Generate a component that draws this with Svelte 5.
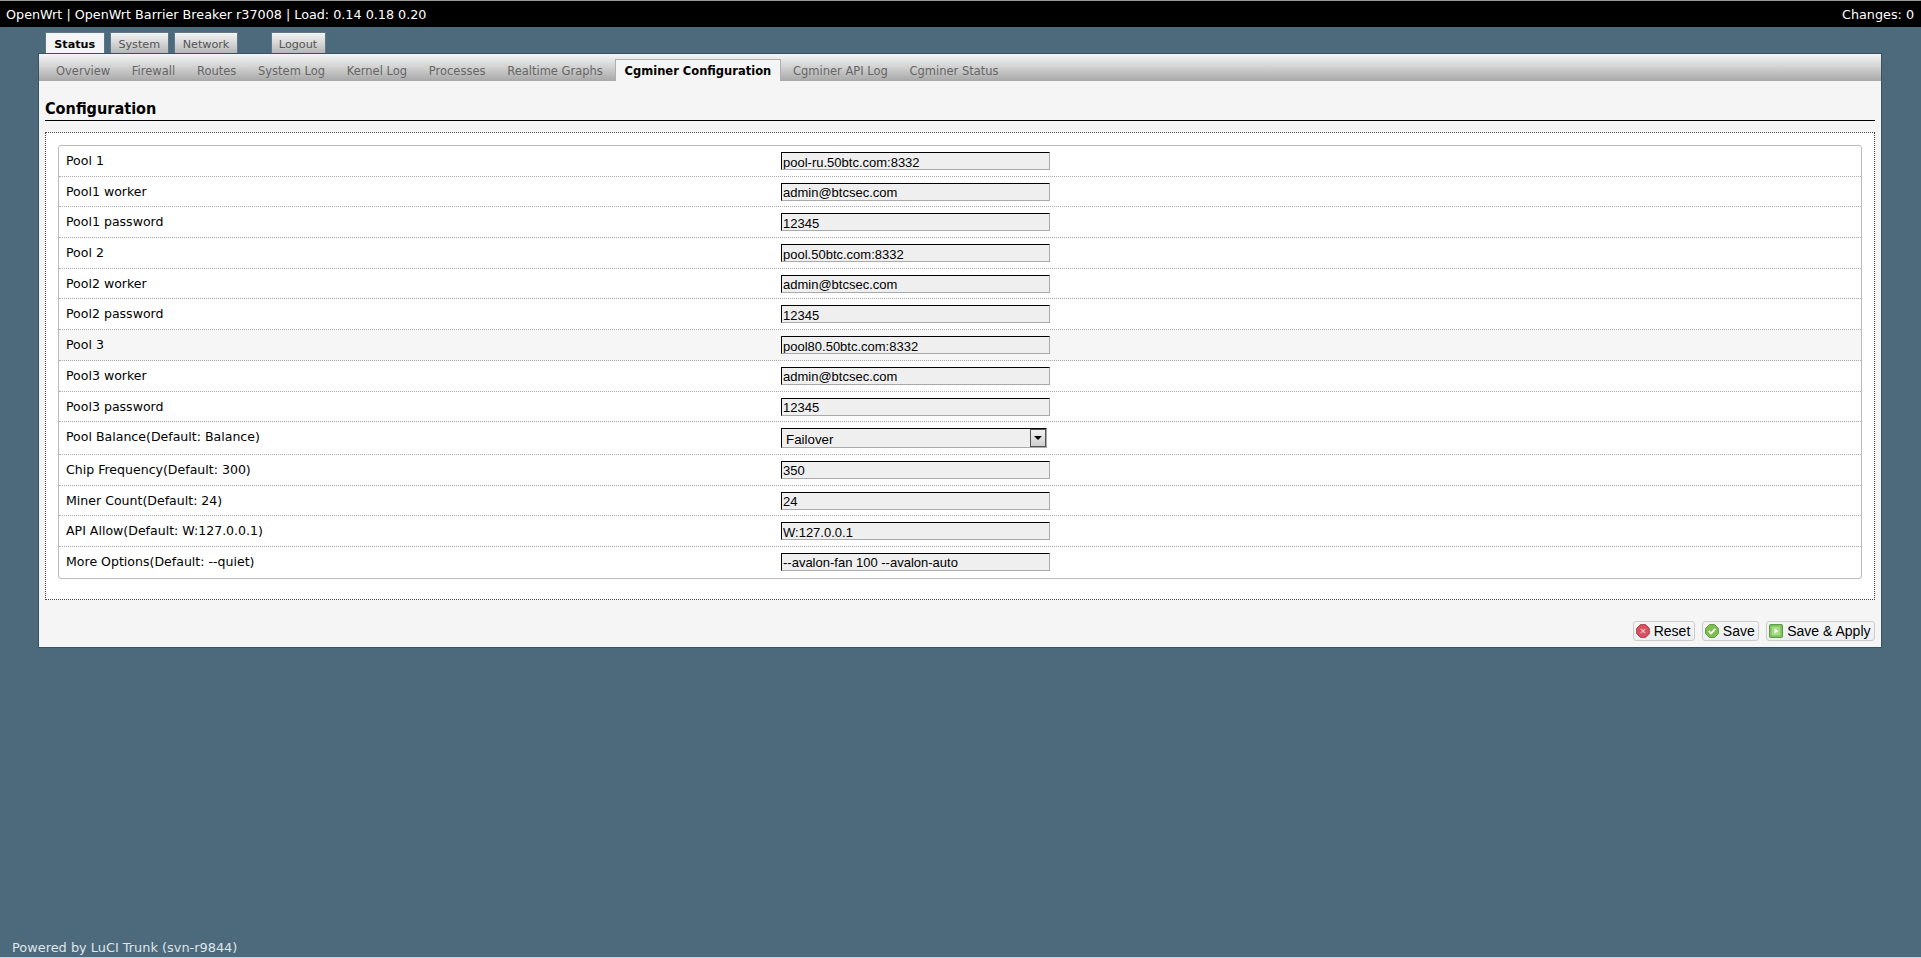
<script>
    const menu = ["Status", "System", "Network"];
    const subTabs = [
        "Overview", "Firewall", "Routes", "System Log", "Kernel Log", "Processes",
        "Realtime Graphs", "Cgminer Configuration", "Cgminer API Log", "Cgminer Status"
    ];
    const activeTab = "Cgminer Configuration";

    const fields = [
        { label: "Pool 1", value: "pool-ru.50btc.com:8332" },
        { label: "Pool1 worker", value: "admin@btcsec.com" },
        { label: "Pool1 password", value: "12345" },
        { label: "Pool 2", value: "pool.50btc.com:8332" },
        { label: "Pool2 worker", value: "admin@btcsec.com" },
        { label: "Pool2 password", value: "12345" },
        { label: "Pool 3", value: "pool80.50btc.com:8332", hover: true },
        { label: "Pool3 worker", value: "admin@btcsec.com" },
        { label: "Pool3 password", value: "12345" },
        { label: "Pool Balance(Default: Balance)", value: "Failover", select: true },
        { label: "Chip Frequency(Default: 300)", value: "350" },
        { label: "Miner Count(Default: 24)", value: "24" },
        { label: "API Allow(Default: W:127.0.0.1)", value: "W:127.0.0.1" },
        { label: "More Options(Default: --quiet)", value: "--avalon-fan 100 --avalon-auto" }
    ];
</script>

<div class="page">
    <header class="topbar">
        <span>OpenWrt | OpenWrt Barrier Breaker r37008 | Load: 0.14 0.18 0.20</span>
        <span>Changes: 0</span>
    </header>

    <nav class="menu">
        {#each menu as item, i}
            <a href="#top" class="menu-tab" class:active={i === 0}>{item}</a>
        {/each}
        <a href="#top" class="menu-tab logout">Logout</a>
    </nav>

    <main class="box">
        <ul class="tabs">
            {#each subTabs as tab}
                <li class="tab" class:active={tab === activeTab}>{tab}</li>
            {/each}
        </ul>

        <div class="content">
            <h2>Configuration</h2>

            <fieldset class="section">
                <div class="table">
                    {#each fields as field}
                        <div class="row" class:hover={field.hover} class:tall={field.select}>
                            <label class="field-label" for={field.label}>{field.label}</label>
                            {#if field.select}
                                <div class="select-wrap">
                                    <select id={field.label}>
                                        <option>Failover</option>
                                        <option>Balance</option>
                                        <option>Load Balance</option>
                                    </select>
                                    <span class="select-arrow"></span>
                                </div>
                            {:else}
                                <input id={field.label} type="text" value={field.value} />
                            {/if}
                        </div>
                    {/each}
                </div>
            </fieldset>

            <div class="actions">
                <button type="reset">
                    <svg width="14" height="14" viewBox="0 0 16 16">
                        <path d="M5 .7h6L15.300 5v6L11 15.300H5L.7 11V5z" fill="#d9505f" stroke="#a33a48" />
                        <path d="M5.500 5.500l5 5m0-5l-5 5" stroke="#f6c9cd" stroke-width="1.300" fill="none" />
                    </svg>
                    Reset
                </button>
                <button type="button">
                    <svg width="14" height="14" viewBox="0 0 16 16">
                        <path d="M5 .7h6L15.300 5v6L11 15.300H5L.7 11V5z" fill="#7fbf4d" stroke="#4f8f2f" />
                        <path d="M4.300 8l2.700 2.800 4.700-5.300" stroke="#fff" stroke-width="2" fill="none" />
                    </svg>
                    Save
                </button>
                <button type="button">
                    <svg width="14" height="14" viewBox="0 0 16 16">
                        <rect x=".5" y=".5" width="15" height="15" rx="1.500" fill="#7fc25a" stroke="#4a8f35" />
                        <rect x="3" y="3" width="10" height="10" fill="#a8dc86" />
                        <path d="M6.500 5l4 3-4 3z" fill="#fff" />
                    </svg>
                    Save &amp; Apply
                </button>
            </div>
        </div>
    </main>

    <footer class="footer">Powered by LuCI Trunk (svn-r9844)</footer>
</div>

<style>
    :global(body) {
        margin: 0;
        background: #4c6a7c;
        font-family: "DejaVu Sans", Verdana, sans-serif;
        font-size: 12px;
    }

    .page {
        display: flex;
        flex-direction: column;
        height: 958px;
        box-sizing: border-box;
        border-top: 1px solid #9a9a9a;
        border-bottom: 1px solid #b5d3e2;
        overflow: hidden;
    }

    .topbar {
        display: flex;
        justify-content: space-between;
        align-items: center;
        height: 26px;
        padding: 0 7px 0 6px;
        background: #000;
        color: #fff;
        font-size: 12.75px;
    }

    .menu {
        display: flex;
        height: 27px;
        margin-left: 45px;
        padding-top: 5px;
        box-sizing: border-box;
        align-items: flex-end;
    }

    .menu-tab {
        display: flex;
        align-items: center;
        justify-content: center;
        box-sizing: border-box;
        width: 59.5px;
        height: 22px;
        margin-right: 5px;
        padding-top: 1px;
        border: 1px solid #5b7788;
        border-bottom: none;
        background: linear-gradient(#f4f4f4, #b4b4b4);
        color: #555;
        font-size: 11.2px;
        text-decoration: none;
    }

    .menu-tab:nth-child(3) {
        width: 64px;
        margin-right: 32.5px;
    }

    .menu-tab.logout {
        width: 55px;
    }

    .menu-tab.active {
        background: #f5f5f5;
        color: #000;
        font-weight: bold;
    }

    .box {
        margin: 0 40px 0 39px;
        background: #f5f5f5;
        box-shadow: 0 0 0 1px #39525f;
    }

    .tabs {
        display: flex;
        align-items: flex-end;
        height: 27px;
        margin: 0;
        padding: 0 0 0 7px;
        list-style: none;
        background: linear-gradient(#f4f5f6, #d8d8d8 40%, #a8a8a8);
    }

    .tab {
        box-sizing: border-box;
        height: 22px;
        padding: 4px 9px 0;
        margin-right: 1.700px;
        border: 1px solid transparent;
        border-bottom: none;
        color: #666;
        font-size: 11.5px;
        white-space: nowrap;
    }

    .tab.active {
        background: #f5f5f5;
        border-color: #b0b0b0;
        color: #000;
        font-weight: bold;
    }

    .content {
        padding: 0 6px;
    }

    h2 {
        margin: 0;
        padding-top: 18px;
        height: 40px;
        box-sizing: border-box;
        border-bottom: 1px solid #000;
        color: #000;
        font-family: "DejaVu Sans Condensed", "DejaVu Sans", sans-serif;
        font-stretch: condensed;
        font-size: 16.1px;
        line-height: 19px;
        font-weight: bold;
    }

    .section {
        margin: 11px 0 0;
        padding: 12px 12px 20px;
        border: 1px dotted #444;
        background: #fff;
        min-width: 0;
    }

    .table {
        border: 1px solid #bbb;
        border-radius: 3px;
        background: #fff;
    }

    .row {
        display: flex;
        box-sizing: border-box;
        height: 30.7px;
        padding-left: 7px;
        border-bottom: 1px dotted #aaa;
    }

    .row:last-child {
        border-bottom: none;
    }

    .row.tall {
        height: 32.7px;
    }

    .row.hover {
        background: #f6f6f6;
    }

    .field-label {
        width: 715px;
        padding-top: 7px;
        line-height: 16px;
        color: #000;
        font-size: 12.55px;
    }

    input,
    select {
        box-sizing: border-box;
        height: 18px;
        margin-top: 6px;
        padding: 2px 1px 0;
        border: 1px solid;
        border-color: #000 #aaa #aaa #000;
        border-radius: 0;
        background: #efefef;
        color: #000;
        font-family: "Liberation Sans", Arial, sans-serif;
        font-size: 13px;
        outline: none;
    }

    input {
        width: 269px;
    }

    .select-wrap {
        position: relative;
        width: 266px;
    }

    select {
        appearance: none;
        width: 100%;
        height: 20px;
        padding-left: 4px;
        font-size: 13.33px;
    }

    .select-arrow {
        position: absolute;
        top: 7px;
        right: 1px;
        box-sizing: border-box;
        width: 16px;
        height: 18px;
        border: 1px solid #555;
        background: linear-gradient(#f2f2f2, #cfcfcf);
    }

    .select-arrow::after {
        content: "";
        position: absolute;
        left: 3px;
        top: 6px;
        border: 4px solid transparent;
        border-top: 4px solid #000;
        border-bottom: none;
    }

    .actions {
        display: flex;
        justify-content: flex-end;
        gap: 7px;
        padding: 21px 0 6px;
    }

    button {
        display: flex;
        align-items: center;
        gap: 4px;
        box-sizing: border-box;
        height: 20px;
        padding: 0 3.500px 0 2px;
        border: 1px solid #ccc;
        border-radius: 3px;
        background: linear-gradient(#f6f6f6, #ebeef2);
        color: #000;
        font-family: "Liberation Sans", Arial, sans-serif;
        font-size: 14px;
    }

    .footer {
        margin-top: auto;
        padding: 0 0 2px 12px;
        color: #dfe5e9;
        font-size: 12.9px;
        line-height: 15px;
    }
</style>
